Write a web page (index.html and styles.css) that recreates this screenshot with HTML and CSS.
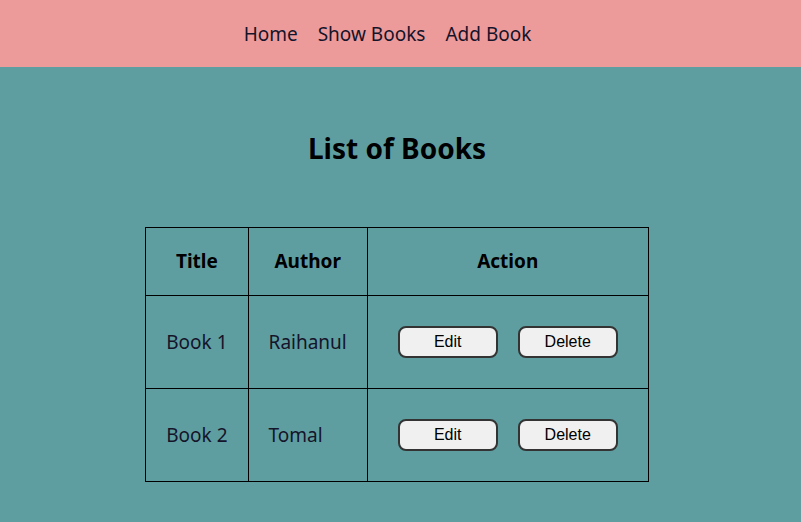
FILE: index.html
```html
<!DOCTYPE html>
<html lang="en">
<head>
    <meta charset="UTF-8">
    <meta name="viewport" content="width=device-width, initial-scale=1.0">
    <title>Books</title>
    <link rel="stylesheet" href="styles.css">
</head>
<body>
    <nav class="navbar">
        <a href="#">Home</a>
        <a href="#">Show Books</a>
        <a href="#">Add Book</a>
    </nav>

    <main class="content">
        <h1>List of Books</h1>
        <table class="book-table">
            <thead>
                <tr>
                    <th>Title</th>
                    <th>Author</th>
                    <th>Action</th>
                </tr>
            </thead>
            <tbody>
                <tr>
                    <td>Book 1</td>
                    <td>Raihanul</td>
                    <td>
                        <div class="actions">
                            <button class="btn">Edit</button>
                            <button class="btn">Delete</button>
                        </div>
                    </td>
                </tr>
                <tr>
                    <td>Book 2</td>
                    <td>Tomal</td>
                    <td>
                        <div class="actions">
                            <button class="btn">Edit</button>
                            <button class="btn">Delete</button>
                        </div>
                    </td>
                </tr>
            </tbody>
        </table>
    </main>
</body>
</html>
```

FILE: styles.css
```css
body {
    margin: 0;
    font-family: 'Noto Sans', sans-serif;
    background-color: #5f9ea0;
    color: #14142a;
}

.navbar {
    height: 67px;
    background-color: #ed9a9b;
    display: flex;
    justify-content: center;
    align-items: center;
    gap: 20px;
    padding-right: 26px;
    box-sizing: border-box;
}

.navbar a {
    color: #14142a;
    text-decoration: none;
    font-size: 19px;
}

.content {
    padding: 0 7px 40px 0;
    display: flex;
    flex-direction: column;
    align-items: center;
}

h1 {
    font-size: 28px;
    color: #000;
    margin: 62px 0 60px;
}

.book-table {
    border-collapse: collapse;
}

.book-table th,
.book-table td {
    border: 1px solid #000;
    padding: 20px;
    font-size: 19px;
    line-height: 27px;
}

.book-table th {
    color: #000;
}

.book-table td {
    text-align: left;
}

.actions {
    display: flex;
}

.btn {
    width: 100px;
    height: 32px;
    margin: 10px;
    font-family: 'Liberation Sans', Arial, sans-serif;
    font-size: 16px;
    color: #000;
    background-color: #f0f0f0;
    border: 2px solid #333;
    border-radius: 8px;
    cursor: pointer;
}
```
